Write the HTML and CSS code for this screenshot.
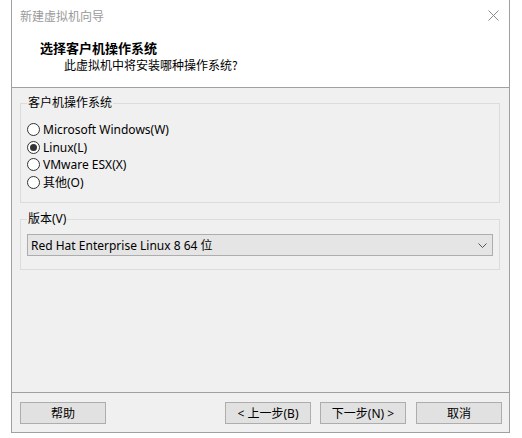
FILE: index.html
```html
<!DOCTYPE html>
<html lang="zh-CN">
<head>
    <meta charset="UTF-8">
    <title>新建虚拟机向导</title>
    <link rel="stylesheet" href="styles.css">
</head>
<body>
    <div class="wizard">
        <div class="titlebar">
            <span class="title">新建虚拟机向导</span>
            <svg class="close" width="11" height="11" viewBox="0 0 11 11">
                <path d="M0.5 0.5 L10.5 10.5 M10.5 0.5 L0.5 10.5" stroke="#8a8a8a" stroke-width="1" fill="none"/>
            </svg>
        </div>

        <div class="header">
            <h1>选择客户机操作系统</h1>
            <p>此虚拟机中将安装哪种操作系统?</p>
        </div>

        <div class="content">
            <fieldset class="group">
                <legend>客户机操作系统</legend>
                <label class="radio"><span class="dot"></span>Microsoft Windows(W)</label>
                <label class="radio checked"><span class="dot"></span>Linux(L)</label>
                <label class="radio"><span class="dot"></span>VMware ESX(X)</label>
                <label class="radio"><span class="dot"></span>其他(O)</label>
            </fieldset>

            <fieldset class="group">
                <legend>版本(V)</legend>
                <div class="select">
                    <span>Red Hat Enterprise Linux 8 64 位</span>
                    <svg width="9" height="5" viewBox="0 0 9 5">
                        <path d="M0.5 0.5 L4.5 4.5 L8.5 0.5" stroke="#555" stroke-width="1" fill="none"/>
                    </svg>
                </div>
            </fieldset>
        </div>

        <div class="footer">
            <button class="btn">帮助</button>
            <div class="spacer"></div>
            <button class="btn">&lt; 上一步(B)</button>
            <button class="btn">下一步(N) &gt;</button>
            <button class="btn cancel">取消</button>
        </div>
    </div>
</body>
</html>
```

FILE: styles.css
```css
* {
    margin: 0;
    padding: 0;
    box-sizing: border-box;
}

body {
    background: #ffffff;
    font-family: "Noto Sans", "Noto Sans CJK SC", sans-serif;
    font-size: 12px;
    color: #000;
}

/* Dialog frame */
.wizard {
    margin-left: 11px;
    width: 499px;
    height: 433px;
    border: 1px solid #a0a0a0;
    border-top: none;
    display: flex;
    flex-direction: column;
}

.titlebar {
    height: 30px;
    padding: 0 10px 0 8px;
    display: flex;
    align-items: center;
    justify-content: space-between;
    background: #fff;
}

.title {
    color: #9a9a9a;
    font-family: "Noto Sans CJK SC", sans-serif;
}

/* Page header */
.header {
    height: 58px;
    background: #fff;
    padding: 9px 0 0 28px;
    border-bottom: 1px solid #a0a0a0;
    font-family: "Noto Sans CJK SC", sans-serif;
}

.header h1 {
    font-size: 13px;
    font-weight: bold;
    line-height: 17px;
}

.header p {
    padding-left: 24px;
    line-height: 17px;
}

/* Main area */
.content {
    flex: 1;
    background: #f0f0f0;
    padding: 7px 9px 0 8px;
}

.group {
    border: 1px solid #dcdcdc;
    padding: 0 6px;
    margin-bottom: 8px;
}

.group legend {
    padding: 0 1px;
    line-height: 16px;
    color: #000;
}

.group:first-child {
    padding-top: 10px;
    padding-bottom: 9px;
    height: 108px;
}

.group:last-child {
    padding-top: 7px;
    height: 59px;
}

.radio {
    display: flex;
    align-items: center;
    height: 17.5px;
    gap: 3px;
}

.dot {
    width: 13px;
    height: 13px;
    border: 1px solid #333;
    border-radius: 50%;
    background: #fff;
    display: flex;
    align-items: center;
    justify-content: center;
}

.radio.checked .dot::after {
    content: '';
    width: 7px;
    height: 7px;
    border-radius: 50%;
    background: #333;
}

.select {
    height: 22px;
    border: 1px solid #adadad;
    background: #e5e5e5;
    display: flex;
    align-items: center;
    justify-content: space-between;
    padding: 0 5px 0 3px;
}

/* Bottom button row */
.footer {
    height: 40px;
    background: #f0f0f0;
    border-top: 1px solid #a0a0a0;
    display: flex;
    align-items: flex-start;
    padding: 9px 7px 0 8px;
    gap: 9px;
}

.spacer {
    flex: 1;
}

.btn {
    width: 86px;
    height: 22px;
    border: 1px solid #adadad;
    background: #e1e1e1;
    font: inherit;
    color: #000;
}

.btn.cancel {
    margin-left: 1px;
}
```
